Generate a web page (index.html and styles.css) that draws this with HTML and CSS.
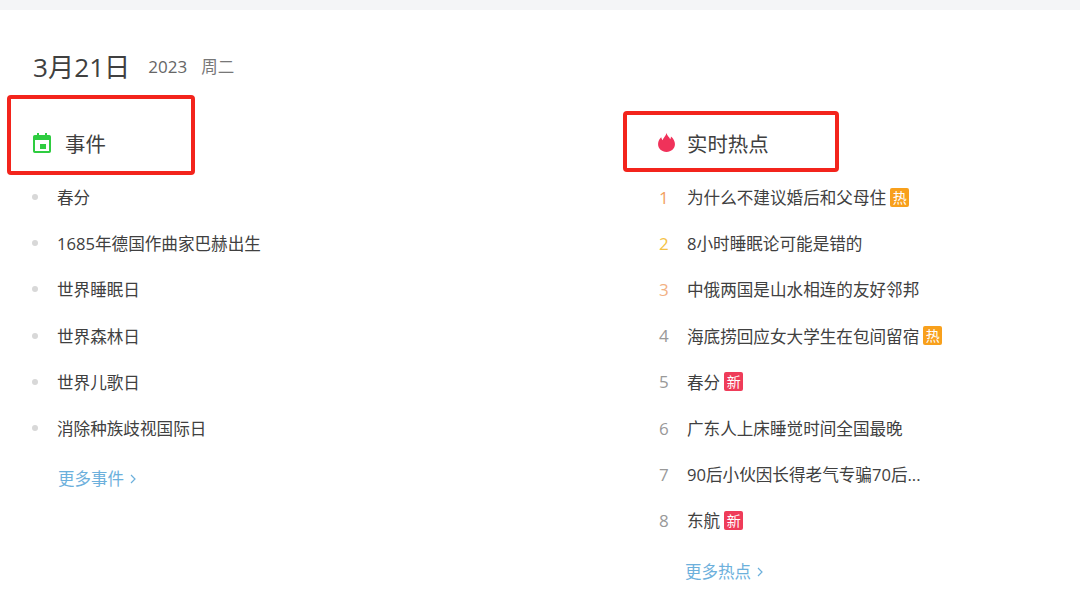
FILE: index.html
```html
<!DOCTYPE html>
<html lang="zh-CN">
<head>
<meta charset="utf-8">
<title>3月21日</title>
<link rel="stylesheet" href="styles.css">
</head>
<body>
<div class="topbar"></div>
<main class="page">
  <div class="date"><span class="day">3月21日</span><span class="year">2023</span><span class="week">周二</span></div>
  <div class="columns">
    <section class="col col-events">
      <h2 class="head"><svg class="ico" viewBox="0 0 18 20" width="18" height="20"><path fill="#2ecc40" d="M4 0h2v2h6V0h2v2h2.200A1.800 1.800 0 0 1 18 3.800v14.400a1.800 1.800 0 0 1-1.800 1.800H1.800A1.800 1.800 0 0 1 0 18.200V3.800A1.800 1.800 0 0 1 1.800 2H4zM2 7v11h14V7z"/><rect x="7" y="11" width="6" height="5" fill="#2ecc40"/></svg><span>事件</span></h2>
      <ul class="list">
        <li class="item"><i class="dot"></i><span>春分</span></li>
        <li class="item"><i class="dot"></i><span>1685年德国作曲家巴赫出生</span></li>
        <li class="item"><i class="dot"></i><span>世界睡眠日</span></li>
        <li class="item"><i class="dot"></i><span>世界森林日</span></li>
        <li class="item"><i class="dot"></i><span>世界儿歌日</span></li>
        <li class="item"><i class="dot"></i><span>消除种族歧视国际日</span></li>
      </ul>
      <a class="more">更多事件<svg class="chev" viewBox="0 0 6 10" width="6" height="10"><path d="M1 1l4 4-4 4" fill="none" stroke="#6cb0dc" stroke-width="1.200"/></svg></a>
    </section>
    <section class="col col-hot">
      <h2 class="head"><svg class="ico flame" viewBox="0 0 16 18" width="17" height="19"><path fill="#f0325a" d="M8 0C8.500 2.500 10.500 3.500 11.500 6 12 5 12.300 4.200 12.200 3.200 14.500 5 16 7.500 16 10.500 16 14.800 12.500 18 8 18S0 14.800 0 10.500C0 7.500 1.500 5.500 3 4 3.200 5 3.600 6 4.200 6.800 5 4.500 7.500 2.500 8 0Z"/></svg><span>实时热点</span></h2>
      <ol class="list">
        <li class="item"><b class="num n1">1</b><span>为什么不建议婚后和父母住</span><em class="tag hot">热</em></li>
        <li class="item"><b class="num n2">2</b><span>8小时睡眠论可能是错的</span></li>
        <li class="item"><b class="num n3">3</b><span>中俄两国是山水相连的友好邻邦</span></li>
        <li class="item"><b class="num">4</b><span>海底捞回应女大学生在包间留宿</span><em class="tag hot">热</em></li>
        <li class="item"><b class="num">5</b><span>春分</span><em class="tag new">新</em></li>
        <li class="item"><b class="num">6</b><span>广东人上床睡觉时间全国最晚</span></li>
        <li class="item"><b class="num">7</b><span>90后小伙因长得老气专骗70后...</span></li>
        <li class="item"><b class="num">8</b><span>东航</span><em class="tag new">新</em></li>
      </ol>
      <a class="more">更多热点<svg class="chev" viewBox="0 0 6 10" width="6" height="10"><path d="M1 1l4 4-4 4" fill="none" stroke="#6cb0dc" stroke-width="1.200"/></svg></a>
    </section>
  </div>
</main>
<div class="mark mark-a"></div>
<div class="mark mark-b"></div>
</body>
</html>
```
FILE: styles.css
```css
* { box-sizing: border-box; }
html, body { margin: 0; padding: 0; background: #fff; }
body {
  width: 1080px;
  height: 606px;
  overflow: hidden;
  position: relative;
  font-family: "Open Sans", "Noto Sans CJK SC", sans-serif;
  color: #404040;
}
.topbar { height: 10px; background: #f4f5f7; }
.page { padding: 36px 0 0 33px; }
.date { display: flex; align-items: center; height: 42px; line-height: 42px; }
.day { font-size: 26.200px; color: #404040; }
.year { font-size: 17px; color: #666; margin-left: 18px; }
.week { font-size: 16.500px; color: #777; margin-left: 14px; }
.columns { display: flex; margin-top: 33px; }
.col-events { width: 625px; }
.head {
  display: flex;
  align-items: center;
  height: 44px;
  margin: 0;
  font-size: 20.400px;
  font-weight: 400;
  color: #404040;
}
.ico { margin-right: 15px; display: block; }
.flame { margin-right: 12px; margin-top: -2px; }
.col-events .ico { margin-right: 14px; }
.list { list-style: none; margin: 9px 0 0; padding: 0; }
.item {
  display: flex;
  align-items: center;
  height: 46.200px;
  font-size: 16.600px;
  white-space: nowrap;
  color: #404040;
}
.dot {
  width: 6px;
  height: 6px;
  border-radius: 50%;
  background: #d8d8d8;
  margin: 0 19px 0 -1px;
  flex: none;
}
.num {
  width: 29px;
  padding-left: 1px;
  font-weight: 400;
  font-size: 17px;
  color: #999;
  flex: none;
}
.n1 { color: #f2a15f; }
.n2 { color: #f5c244; }
.n3 { color: #f2b183; }
.tag {
  display: block;
  width: 19px;
  height: 19px;
  line-height: 19px;
  margin-left: 4px;
  border-radius: 2px;
  font-style: normal;
  font-size: 14px;
  text-align: center;
  color: #fff;
}
.hot { background: #f8a01c; }
.new { background: #ef3c59; }
.more {
  display: flex;
  align-items: center;
  height: 24px;
  margin-top: 15px;
  padding-left: 25px;
  font-size: 16.500px;
  color: #6cb0dc;
}
.col-hot .more { padding-left: 27px; margin-top: 15px; }
.chev { margin-left: 6px; margin-top: 2px; }
.mark {
  position: absolute;
  border: 4px solid #f3241c;
  border-radius: 4px;
  pointer-events: none;
}
.mark-a { left: 7px; top: 95px; width: 188px; height: 80px; }
.mark-b { left: 623px; top: 111px; width: 216px; height: 61px; }
```
